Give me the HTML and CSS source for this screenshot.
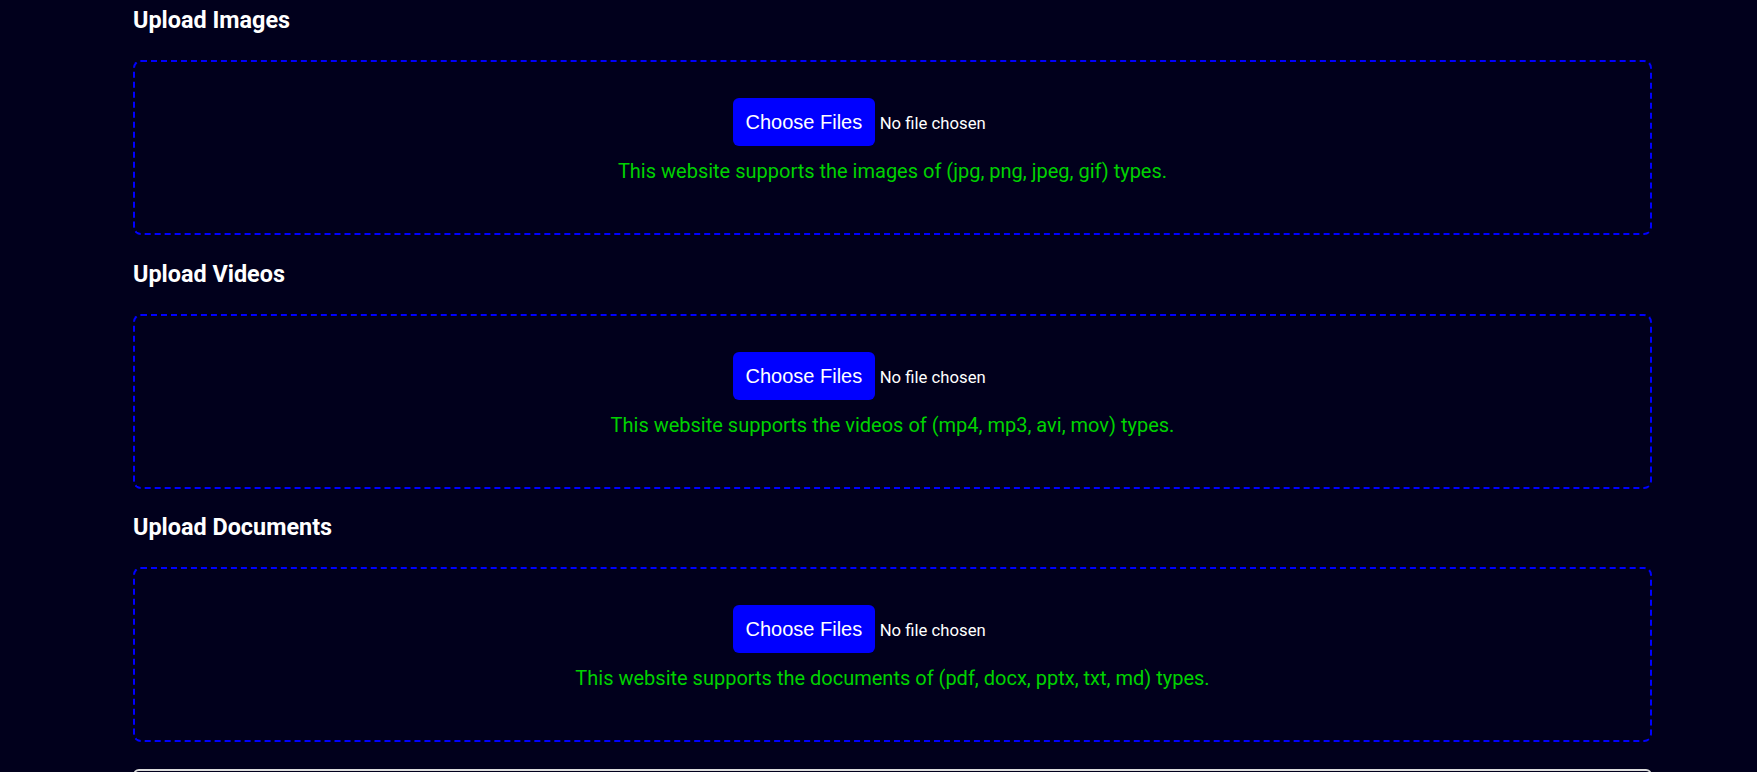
FILE: index.html
```html
<!DOCTYPE html>
<html lang="en">
<head>
<meta charset="utf-8">
<title>Upload Files</title>
<link rel="stylesheet" href="styles.css">
</head>
<body>
<main class="page">
  <section class="upload">
    <h2 class="upload-title">Upload Images</h2>
    <div class="dropzone">
      <div class="file-input">
        <span class="file-btn">Choose Files</span>
        <span class="file-name">No file chosen</span>
      </div>
      <p class="hint">This website supports the images of (jpg, png, jpeg, gif) types.</p>
    </div>
  </section>
  <section class="upload">
    <h2 class="upload-title">Upload Videos</h2>
    <div class="dropzone">
      <div class="file-input">
        <span class="file-btn">Choose Files</span>
        <span class="file-name">No file chosen</span>
      </div>
      <p class="hint">This website supports the videos of (mp4, mp3, avi, mov) types.</p>
    </div>
  </section>
  <section class="upload">
    <h2 class="upload-title">Upload Documents</h2>
    <div class="dropzone">
      <div class="file-input">
        <span class="file-btn">Choose Files</span>
        <span class="file-name">No file chosen</span>
      </div>
      <p class="hint">This website supports the documents of (pdf, docx, pptx, txt, md) types.</p>
    </div>
  </section>
  <div class="next-panel"></div>
</main>
</body>
</html>
```

FILE: styles.css
```css
html, body {
  margin: 0;
  padding: 0;
  overflow: hidden;
  background: #01001c;
}

body {
  font-family: Roboto, "Noto Sans", sans-serif;
  color: #ffffff;
}

.page {
  display: flex;
  flex-direction: column;
  gap: 25.5px;
  padding: 7px 105px 0 133px;
}

.upload {
  display: flex;
  flex-direction: column;
  gap: 26px;
}

.upload-title {
  margin: 0;
  font-size: 23.4px;
  font-weight: 700;
  line-height: 27px;
  color: #ffffff;
}

.dropzone {
  box-sizing: border-box;
  height: 175px;
  border: 2px dashed #0000ff;
  border-radius: 8px;
  padding: 36px 20px 0;
  display: flex;
  flex-direction: column;
  align-items: center;
}

.file-input {
  width: 319px;
  display: flex;
  align-items: baseline;
  gap: 5px;
}

.file-btn {
  background: #0000ff;
  color: #ffffff;
  font-family: "Liberation Sans", Arial, sans-serif;
  font-size: 20px;
  line-height: 24px;
  padding: 12px 12.5px;
  border-radius: 6px;
  white-space: nowrap;
}

.file-name {
  font-size: 16.7px;
  color: #ffffff;
  white-space: nowrap;
}

.hint {
  margin: 14px 0 0;
  font-size: 20px;
  line-height: 23px;
  color: #00d200;
  text-align: center;
}

.next-panel {
  height: 120px;
  border: 2px solid #dcdcdc;
  border-radius: 6px;
  margin-top: 1px;
}
```
